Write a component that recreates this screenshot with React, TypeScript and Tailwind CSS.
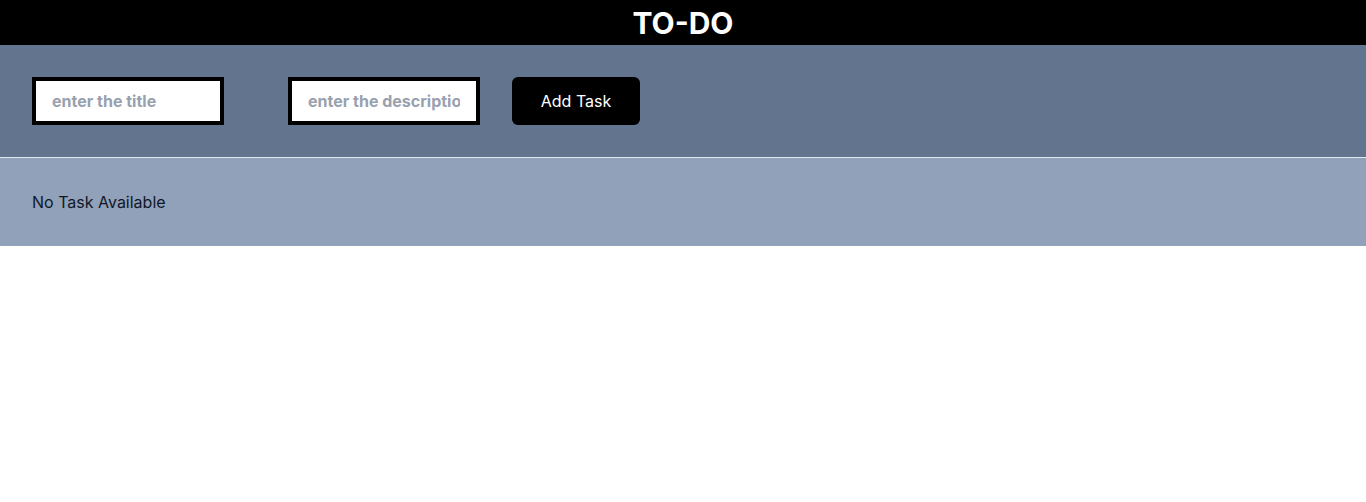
import React from "react";

export default function App() {
  return (
    <div className="w-full bg-white" style={{ fontFamily: "Inter, 'Noto Sans', sans-serif" }}>
      <header className="h-[45px] bg-black flex items-center justify-center">
        <h1 className="text-3xl font-bold text-white">TO-DO</h1>
      </header>
      <div className="bg-slate-500 p-8 flex items-center border-b border-slate-200">
        <input
          type="text"
          placeholder="enter the title"
          className="w-48 h-12 border-4 border-black bg-white px-4 font-bold text-base text-black placeholder:text-gray-400 outline-none mr-16"
        />
        <input
          type="text"
          placeholder="enter the description"
          className="w-48 h-12 border-4 border-black bg-white px-4 font-bold text-base text-black placeholder:text-gray-400 outline-none mr-8"
        />
        <button className="w-32 h-12 bg-black text-white rounded-md text-base">Add Task</button>
      </div>
      <div className="bg-slate-400 p-8">
        <p className="text-base text-gray-900">No Task Available</p>
      </div>
    </div>
  );
}
